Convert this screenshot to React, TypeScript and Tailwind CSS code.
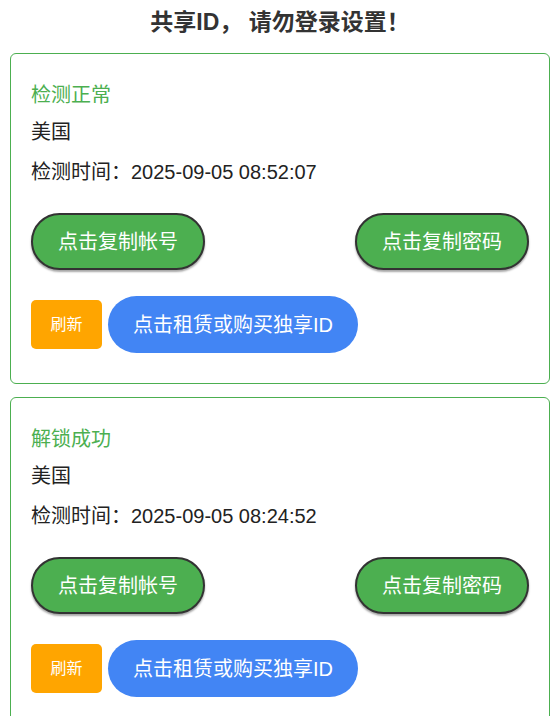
type Account = {
  status: string;
  region: string;
  checkedAt: string;
};

const accounts: Account[] = [
  { status: "检测正常", region: "美国", checkedAt: "2025-09-05 08:52:07" },
  { status: "解锁成功", region: "美国", checkedAt: "2025-09-05 08:24:52" },
];

const AccountCard = ({ item }: { item: Account }) => (
  <div className="mx-[10px] mb-[13px] rounded-[6px] border border-[#4caf50] px-[20px] pt-[26px] pb-[30px]">
    {/* 状態 */}
    <p className="h-[30px] text-[20px] leading-[30px] text-[#4caf50]">{item.status}</p>
    <p className="mt-[7px] h-[30px] text-[20px] leading-[30px] text-[#222]">{item.region}</p>
    <p className="mt-[10px] h-[30px] text-[20px] leading-[30px] text-[#222]">
      检测时间：{item.checkedAt}
    </p>

    {/* コピー */}
    <div className="mt-[26px] flex justify-between">
      <button className="h-[57px] w-[174px] rounded-full border-2 border-[#333] bg-[#4caf50] text-[20px] text-white shadow-[0_2px_2px_rgba(0,0,0,0.35)]">
        点击复制帐号
      </button>
      <button className="h-[57px] w-[174px] rounded-full border-2 border-[#333] bg-[#4caf50] text-[20px] text-white shadow-[0_2px_2px_rgba(0,0,0,0.35)]">
        点击复制密码
      </button>
    </div>

    <div className="mt-[26px] flex items-center gap-[6px]">
      <button className="h-[49px] w-[71px] rounded-[5px] bg-[#ffa500] text-[16px] text-white">
        刷新
      </button>
      <button className="h-[57px] w-[250px] rounded-full bg-[#4285f4] text-[20px] text-white">
        点击租赁或购买独享ID
      </button>
    </div>
  </div>
);

export default function App() {
  return (
    <div
      className="min-h-screen bg-white"
      style={{ fontFamily: '"Liberation Sans", "Noto Sans CJK SC", sans-serif' }}
    >
      <h1 className="h-[53px] pt-[6px] text-center text-[23px] leading-[32px] font-bold text-[#333]">
        共享ID， 请勿登录设置！
      </h1>
      {accounts.map((a) => (
        <AccountCard key={a.checkedAt} item={a} />
      ))}
    </div>
  );
}
